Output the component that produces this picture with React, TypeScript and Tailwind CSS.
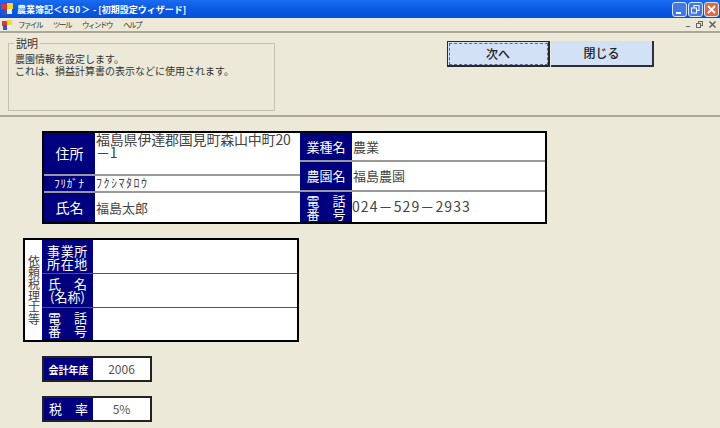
import React from 'react';

const font = "[font-family:'Noto_Sans_CJK_JP','Liberation_Sans',sans-serif]";

const AppIcon = () => (
  <svg width="12" height="12" viewBox="0 0 12 12" className="shrink-0">
    <rect x="0" y="1" width="6" height="6" fill="#d83a2e" />
    <rect x="6" y="0" width="6" height="6" fill="#f4d83a" />
    <rect x="1" y="6" width="5" height="6" fill="#2f55c8" />
    <rect x="6" y="6" width="5" height="5" fill="#e8eef8" />
  </svg>
);

const CaptionButton = ({ tone, children }: { tone: 'blue' | 'red'; children: React.ReactNode }) => (
  <div
    className={`flex h-[15px] w-[15px] items-center justify-center rounded-[3px] border border-[#d8e4fa] ${
      tone === 'red' ? 'bg-[#dc6a45]' : 'bg-[#4478e4]'
    }`}
  >
    {children}
  </div>
);

const TitleBar = () => (
  <div className="flex h-[18px] items-center bg-gradient-to-b from-[#1a6cf0] via-[#0a58e4] to-[#0650d8] pl-[1px] pr-[1px]">
    <AppIcon />
    <span className="ml-[4px] whitespace-pre text-[9px] leading-none font-bold text-white">
      農業簿記<span className="tracking-[0.8px]">＜650＞</span> - [初期設定ウィザード]
    </span>
    <div className="ml-auto flex gap-[1px]">
      <CaptionButton tone="blue">
        <div className="mt-[7px] mr-[3px] h-[2px] w-[5px] bg-white" />
      </CaptionButton>
      <CaptionButton tone="blue">
        <svg width="9" height="9" viewBox="0 0 9 9" fill="none" stroke="white">
          <rect x="3" y="0.5" width="5" height="5" />
          <rect x="0.5" y="3" width="5" height="5" fill="#4478e4" />
        </svg>
      </CaptionButton>
      <CaptionButton tone="red">
        <svg width="9" height="9" viewBox="0 0 9 9" stroke="white" strokeWidth="1.8">
          <path d="M1 1L8 8M8 1L1 8" />
        </svg>
      </CaptionButton>
    </div>
  </div>
);

const MenuBar = () => (
  <div className="flex h-[13px] items-center bg-[#ece9d8] pl-[2px] pr-[4px] text-[7.5px] leading-none tracking-[-1.5px] text-[#333]">
    <svg width="10" height="10" viewBox="0 0 10 10" className="shrink-0">
      <rect x="0" y="1" width="5" height="5" fill="#d83a2e" />
      <rect x="5" y="0" width="5" height="5" fill="#f4d83a" />
      <rect x="1" y="5" width="4" height="5" fill="#2f55c8" />
      <rect x="5" y="5" width="4" height="4" fill="#e8eef8" />
    </svg>
    <div className="ml-[6px] flex gap-[11px]">
      <span>ファイル</span>
      <span>ツール</span>
      <span>ウィンドウ</span>
      <span>ヘルプ</span>
    </div>
    <div className="ml-auto flex items-center gap-[6px] text-[#666]">
      <div className="mt-[3px] h-[1px] w-[4px] bg-[#666]" />
      <svg width="7" height="7" viewBox="0 0 7 7" fill="none" stroke="#666">
        <rect x="2.5" y="0.5" width="4" height="4" />
        <rect x="0.5" y="2.5" width="4" height="4" fill="#ece9d8" />
      </svg>
      <svg width="7" height="7" viewBox="0 0 7 7" stroke="#555" strokeWidth="1.3">
        <path d="M0.5 0.5L6.5 6.5M6.5 0.5L0.5 6.5" />
      </svg>
    </div>
  </div>
);

const WizardButton = ({ label, focused }: { label: string; focused?: boolean }) => (
  <button
    className={`flex h-[26px] w-[103px] items-center justify-center bg-[#d3e1f7] text-[12px] leading-none font-medium text-[#222] ${
      focused
        ? 'border border-r-2 border-b-2 border-[#222a3a] outline-1 -outline-offset-3 outline-dashed outline-[#667]'
        : 'border-r-2 border-b-2 border-[#2a3040]'
    }`}
  >
    {label}
  </button>
);

const TopPanel = () => (
  <div className="flex h-[86px] border-t-2 border-b-2 border-t-[#aca899] border-b-[#aca899] bg-[#ece9d8] pt-[8px]">
    <div className="relative mt-[2px] ml-[8px] h-[68px] w-[267px] border border-[#c5c2b2] pt-[9px] pl-[6px] text-[10px] leading-[12px] text-[#333]">
      <span className="absolute top-[-7px] left-[5px] bg-[#ece9d8] px-[2px] text-[11px] leading-[12px]">説明</span>
      <p className="whitespace-nowrap">農園情報を設定します。</p>
      <p className="whitespace-nowrap">これは、損益計算書の表示などに使用されます。</p>
    </div>
    <div className="ml-[172px] flex items-start gap-[1px]">
      <WizardButton label="次へ" focused />
      <WizardButton label="閉じる" />
    </div>
  </div>
);

const Label = ({ className, children }: { className: string; children: React.ReactNode }) => (
  <div className={`flex items-center justify-center bg-[#00007f] text-center text-white ${className}`}>{children}</div>
);

const Cell = ({ className, children }: { className: string; children?: React.ReactNode }) => (
  <div className={`bg-white text-[#444] ${className}`}>{children}</div>
);

const FarmTable = () => (
  <div className="ml-[42px] flex h-[93px] w-[505px] border-2 border-black bg-[#999] text-[13px]">
    <div className="flex w-[256px] flex-col gap-[2px]">
      <div className="flex h-[42px]">
        <Label className="w-[51px] text-[14px]">住所</Label>
        <Cell className="w-[205px] pl-[1px] text-[14px] leading-[13px] tracking-[-0.2px]">福島県伊達郡国見町森山中町20－1</Cell>
      </div>
      <div className="flex h-[15px]">
        <Label className="w-[51px] text-[11px] leading-none tracking-[0.8px]">ﾌﾘｶﾞﾅ</Label>
        <Cell className="flex w-[205px] items-center pl-[1px] text-[12px] leading-none tracking-[1.5px]">ﾌｸｼﾏﾀﾛｳ</Cell>
      </div>
      <div className="flex h-[30px]">
        <Label className="w-[51px] text-[14px]">氏名</Label>
        <Cell className="flex w-[205px] items-center pl-[1px] text-[13px]">福島太郎</Cell>
      </div>
    </div>
    <div className="flex flex-1 flex-col gap-[2px]">
      <div className="flex h-[28px]">
        <Label className="w-[52px] text-[13px]">業種名</Label>
        <Cell className="flex flex-1 items-center pl-[1px] text-[13px]">農業</Cell>
      </div>
      <div className="flex h-[28px]">
        <Label className="w-[52px] text-[13px]">農園名</Label>
        <Cell className="flex flex-1 items-center pl-[1px] text-[13px]">福島農園</Cell>
      </div>
      <div className="flex h-[31px]">
        <Label className="w-[52px] text-[13px] leading-[13px]">
          電　話
          <br />
          番　号
        </Label>
        <Cell className="flex flex-1 items-center text-[14px] tracking-[1.1px]">024－529－2933</Cell>
      </div>
    </div>
  </div>
);

const TaxAgentTable = () => (
  <div className="mt-[14px] ml-[23px] flex h-[104px] w-[276px] border-2 border-black bg-[#555] text-[13px] leading-[13px]">
    <div className="flex w-[17px] items-center justify-center bg-white text-[#444]">
      <span className="text-[12px] leading-[12px] tracking-[-0.3px] [writing-mode:vertical-rl]">依頼税理士等</span>
    </div>
    <div className="flex flex-1 flex-col gap-[1px]">
      <div className="flex h-[34px]">
        <Label className="w-[51px] tracking-[0.7px]">
          事業所
          <br />
          所在地
        </Label>
        <Cell className="flex-1" />
      </div>
      <div className="flex h-[33px]">
        <Label className="w-[51px]">
          氏　名
          <br />
          (名称)
        </Label>
        <Cell className="flex-1" />
      </div>
      <div className="flex h-[33px]">
        <Label className="w-[51px]">
          電　話
          <br />
          番　号
        </Label>
        <Cell className="flex-1" />
      </div>
    </div>
  </div>
);

const SmallField = ({
  label,
  labelClass,
  value,
  marginClass,
}: {
  label: string;
  labelClass: string;
  value: string;
  marginClass: string;
}) => (
  <div className={`ml-[42px] flex h-[26px] w-[110px] border-2 border-[#222] ${marginClass}`}>
    <Label className={`w-[49px] ${labelClass}`}>{label}</Label>
    <div className="flex flex-1 items-center justify-center bg-white text-[12px] text-[#555]">{value}</div>
  </div>
);

export default function App() {
  return (
    <div className={`h-[428px] w-[720px] overflow-hidden bg-[#ece9d8] ${font}`}>
      <TitleBar />
      <MenuBar />
      <TopPanel />
      <div className="pt-[14px]">
        <FarmTable />
        <TaxAgentTable />
        <SmallField label="会計年度" labelClass="text-[10px] font-bold" value="2006" marginClass="mt-[14px]" />
        <SmallField label="税　率" labelClass="text-[13px]" value="5%" marginClass="mt-[14px]" />
      </div>
    </div>
  );
}
